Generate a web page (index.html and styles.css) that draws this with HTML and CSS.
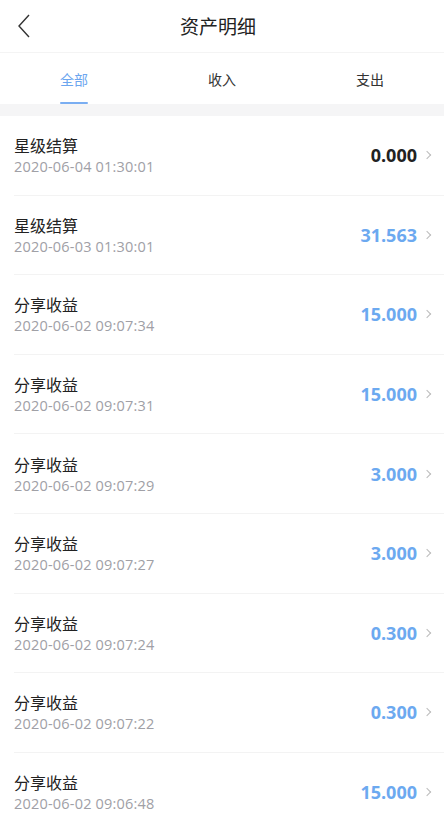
FILE: index.html
```html
<!DOCTYPE html>
<html lang="zh-CN">

<head>
    <meta charset="UTF-8">
    <meta name="viewport" content="width=device-width, initial-scale=1.0">
    <title>资产明细</title>
    <link rel="stylesheet" href="styles.css">
</head>

<body>
    <header class="topbar">
        <span class="back">
            <svg width="14" height="24" viewBox="0 0 14 24"><path d="M12 1 L2 12 L12 23" fill="none" stroke="#333" stroke-width="1.4"/></svg>
        </span>
        <h1>资产明细</h1>
    </header>

    <nav class="tabs">
        <div class="tab active">全部</div>
        <div class="tab">收入</div>
        <div class="tab">支出</div>
    </nav>

    <ul class="records">
        <li class="record">
            <div class="info"><p class="name">星级结算</p><p class="time">2020-06-04 01:30:01</p></div>
            <div class="amount zero">0.000</div>
        </li>
        <li class="record">
            <div class="info"><p class="name">星级结算</p><p class="time">2020-06-03 01:30:01</p></div>
            <div class="amount">31.563</div>
        </li>
        <li class="record">
            <div class="info"><p class="name">分享收益</p><p class="time">2020-06-02 09:07:34</p></div>
            <div class="amount">15.000</div>
        </li>
        <li class="record">
            <div class="info"><p class="name">分享收益</p><p class="time">2020-06-02 09:07:31</p></div>
            <div class="amount">15.000</div>
        </li>
        <li class="record">
            <div class="info"><p class="name">分享收益</p><p class="time">2020-06-02 09:07:29</p></div>
            <div class="amount">3.000</div>
        </li>
        <li class="record">
            <div class="info"><p class="name">分享收益</p><p class="time">2020-06-02 09:07:27</p></div>
            <div class="amount">3.000</div>
        </li>
        <li class="record">
            <div class="info"><p class="name">分享收益</p><p class="time">2020-06-02 09:07:24</p></div>
            <div class="amount">0.300</div>
        </li>
        <li class="record">
            <div class="info"><p class="name">分享收益</p><p class="time">2020-06-02 09:07:22</p></div>
            <div class="amount">0.300</div>
        </li>
        <li class="record">
            <div class="info"><p class="name">分享收益</p><p class="time">2020-06-02 09:06:48</p></div>
            <div class="amount">15.000</div>
        </li>
    </ul>
</body>

</html>
```

FILE: styles.css
```css
/* Page */
body {
    margin: 0;
    font-family: "Open Sans", "Noto Sans CJK SC", sans-serif;
    background-color: #fff;
    color: #333;
    overflow: hidden;
}

/* Top bar */
.topbar {
    position: relative;
    height: 52px;
    display: flex;
    align-items: center;
    justify-content: center;
    padding-right: 8px;
    border-bottom: 1px solid #f4f4f4;
}

.topbar h1 {
    margin: 0;
    font-size: 19px;
    font-weight: normal;
    color: #222;
}

.back {
    position: absolute;
    left: 17px;
    top: 14px;
    display: flex;
}

/* Tabs */
.tabs {
    display: flex;
    height: 51px;
    border-bottom: 12px solid #f5f5f6;
}

.tab {
    flex: 1;
    display: flex;
    align-items: center;
    justify-content: center;
    position: relative;
    font-size: 14px;
    color: #333;
}

.tab.active {
    color: #6ca6ef;
}

.tab.active::after {
    content: "";
    position: absolute;
    bottom: 0;
    left: 50%;
    width: 28px;
    height: 2px;
    margin-left: -14px;
    background-color: #7aaef2;
    border-radius: 1px;
}

/* Records list */
.records {
    list-style: none;
    margin: 0;
    padding: 0 0 0 14px;
}

.record {
    box-sizing: border-box;
    height: 79.6px;
    display: flex;
    align-items: center;
    justify-content: space-between;
    padding-right: 14px;
    padding-top: 2px;
    border-bottom: 1px solid #f3f3f3;
}

.info p {
    margin: 0;
}

.name {
    font-size: 16px;
    line-height: 22px;
    color: #222;
}

.time {
    font-size: 14.5px;
    line-height: 20px;
    letter-spacing: 0.2px;
    color: #a0a0a6;
}

.amount {
    display: flex;
    align-items: center;
    font-size: 18px;
    font-weight: bold;
    color: #6ca9f0;
    margin-top: -2px;
}

.amount.zero {
    color: #222;
}

.amount::after {
    content: "";
    width: 5px;
    height: 5px;
    margin-left: 7px;
    border-top: 1px solid #bbb;
    border-right: 1px solid #bbb;
    transform: rotate(45deg);
}
```
